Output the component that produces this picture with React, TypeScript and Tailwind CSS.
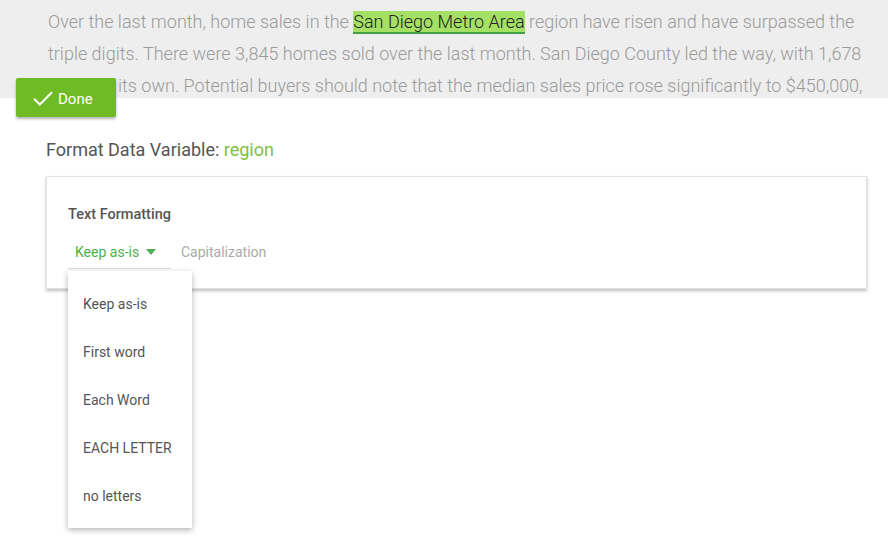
import React from "react";

const menuItems = ["Keep as-is", "First word", "Each Word", "EACH LETTER", "no letters"];

function CheckIcon() {
  return (
    <svg width="22" height="22" viewBox="0 0 24 24" fill="none">
      <path d="M3 12.5l5.5 5.5L21 5.5" stroke="white" strokeWidth="2.2" strokeLinecap="square" />
    </svg>
  );
}

export default function App() {
  return (
    <div className="relative min-h-[552px] bg-white font-['Roboto','Liberation_Sans',sans-serif]">
      {/* preview paragraph */}
      <div className="h-[98px] overflow-hidden bg-[#eeeeee] pl-[48px] pt-[6px] text-[18px] font-light leading-[32px] text-[#9a9a9a]">
        <div className="whitespace-nowrap">
          Over the last month, home sales in the{" "}
          <span className="border-b-2 border-[#43a047] bg-[#a3e063] text-[#222]">San Diego Metro Area</span> region
          have risen and have surpassed the
        </div>
        <div className="whitespace-nowrap">
          triple digits. There were 3,845 homes sold over the last month. San Diego County led the way, with 1,678
        </div>
        <div className="whitespace-nowrap">
          sales on its own. Potential buyers should note that the median sales price rose significantly to $450,000,
        </div>
      </div>

      <button
        type="button"
        className="absolute left-[16px] top-[78px] flex h-[39px] w-[100px] items-center gap-[4px] rounded-[2px] bg-[#6fbb25] pl-[16px] pt-[3px] text-[15px] text-white shadow-[0_2px_3px_rgba(0,0,0,0.3)]"
      >
        <CheckIcon />
        Done
      </button>

      <div className="mt-[40px] pl-[46px] text-[18px] leading-[24px] text-[#555]">
        Format Data Variable: <span className="text-[#7cc242]">region</span>
      </div>

      <div className="ml-[46px] mt-[14px] w-[821px] border border-[#e2e2e2] pb-[19px] pl-[21px] pt-[28px] shadow-[0_2px_3px_rgba(0,0,0,0.25)]">
        <div className="text-[14.5px] font-medium leading-[20px] text-[#555]">Text Formatting</div>
        <div className="mt-[11px] flex items-end text-[14px]">
          <div className="relative">
            <div className="flex h-[33px] w-[103px] items-center gap-[7px] border-b border-[#dddddd] pl-[7px] text-[#4caf50]">
              Keep as-is
              <svg width="10" height="6" viewBox="0 0 10 6">
                <path d="M0 0h10L5 6z" fill="#4caf50" />
              </svg>
            </div>
            <div className="absolute left-0 top-full z-10 mt-[2px] w-[124px] bg-white pb-2 pt-[9px] shadow-[0_2px_6px_rgba(0,0,0,0.3)]">
              {menuItems.map((item) => (
                <div key={item} className="flex h-12 items-center pl-[15px] text-[14px] text-[#555]">
                  {item}
                </div>
              ))}
            </div>
          </div>
          <div className="flex h-[33px] items-center pl-[10px] text-[#aaaaaa]">Capitalization</div>
        </div>
      </div>
    </div>
  );
}
